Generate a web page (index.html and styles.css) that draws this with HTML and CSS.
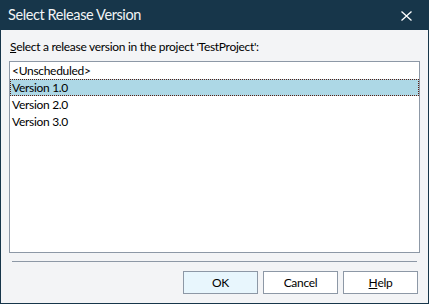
FILE: index.html
```html
<!DOCTYPE html>
<html>
<head>
<meta charset="utf-8">
<link rel="stylesheet" href="styles.css">
</head>
<body>
<div class="window">
  <div class="titlebar">
    <span class="title">Select Release Version</span>
    <span class="close">
      <svg width="11" height="10" viewBox="0 0 11 10"><path d="M0.5 0.5 L10.5 9.5 M10.5 0.5 L0.5 9.5" stroke="#ffffff" stroke-width="1.3" fill="none"/></svg>
    </span>
  </div>
  <div class="content">
    <div class="label"><span class="u">S</span>elect a release version in the project 'TestProject':</div>
    <div class="list">
      <div class="row">&lt;Unscheduled&gt;</div>
      <div class="row selected">Version 1.0</div>
      <div class="row">Version 2.0</div>
      <div class="row">Version 3.0</div>
    </div>
    <div class="separator"></div>
    <div class="buttons">
      <div class="btn default">OK</div>
      <div class="btn">Cancel</div>
      <div class="btn"><span class="u">H</span>elp</div>
    </div>
  </div>
</div>
</body>
</html>
```
FILE: styles.css
```css
html, body {
  margin: 0;
  padding: 0;
}
body {
  width: 429px;
  height: 304px;
  font-family: "Lato", "Open Sans", sans-serif;
  font-size: 12px;
  letter-spacing: -0.3px;
  color: #000;
}
.window {
  box-sizing: border-box;
  width: 429px;
  height: 304px;
  display: flex;
  flex-direction: column;
  background: #f3f4f6;
  border: 1px solid #17364a;
  border-top: none;
}
.titlebar {
  height: 30px;
  margin: 0 -1px;
  background: #17364a;
  display: flex;
  align-items: center;
  justify-content: space-between;
  padding: 0 17px 0 8px;
  flex: none;
}
.title {
  color: #f2f4f6;
  font-size: 14.5px;
  letter-spacing: -0.4px;
  line-height: 18px;
}
.close {
  display: flex;
  width: 11px;
  height: 10px;
  margin-top: 1px;
}
.content {
  flex: 1;
  display: flex;
  flex-direction: column;
  padding: 9px 8px 9px 8px;
}
.label {
  height: 16px;
  line-height: 16px;
  padding-left: 1px;
}
.u {
  text-decoration: underline;
}
.list {
  margin-top: 6px;
  height: 192px;
  box-sizing: border-box;
  background: #ffffff;
  border: 1px solid #8d98a6;
  display: flex;
  flex-direction: column;
}
.row {
  height: 17px;
  line-height: 17px;
  padding-left: 2px;
  box-sizing: border-box;
  white-space: nowrap;
}
.row.selected {
  background: #add8e6;
  border: 1px dotted #5a1e12;
  line-height: 15px;
  padding-left: 1px;
}
.separator {
  margin: 8px 3px 0 3px;
  height: 1px;
  background: #8d98a6;
}
.buttons {
  margin-top: 9px;
  display: flex;
  justify-content: flex-end;
  gap: 5px;
  padding-right: 2px;
}
.btn {
  box-sizing: border-box;
  width: 75px;
  height: 23px;
  border: 1px solid #8d98a6;
  background: #ffffff;
  display: flex;
  align-items: center;
  justify-content: center;
  line-height: 16px;
}
.btn.default {
  background: #e8f6fd;
}
```
